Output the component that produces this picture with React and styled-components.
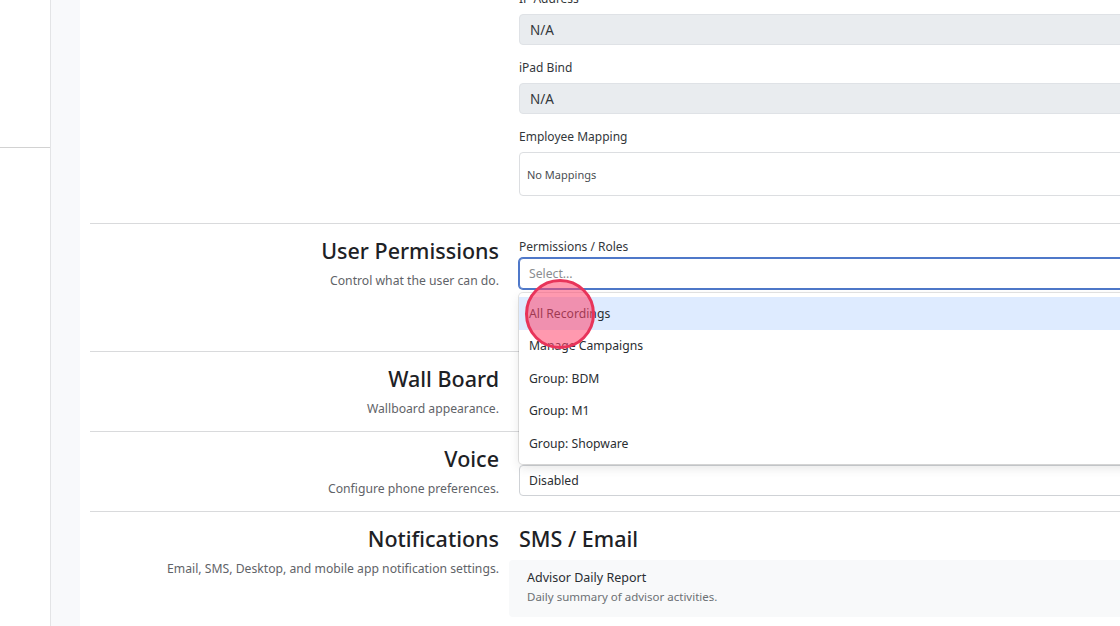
import React from 'react'
import styled, { createGlobalStyle } from 'styled-components'

const GlobalStyle = createGlobalStyle`
  * { box-sizing: border-box; }
  html, body {
    margin: 0;
    padding: 0;
    height: 626px;
    overflow: hidden;
    background: #fff;
    font-family: "Noto Sans", "Open Sans", sans-serif;
    color: #212529;
  }
`

const roles = ['All Recordings', 'Manage Campaigns', 'Group: BDM', 'Group: M1', 'Group: Shopware']

const App = () => {
  return <Page>
    <GlobalStyle />
    <Sidebar>
      <SidebarTop />
    </Sidebar>
    <Gutter />
    <Main>
      <Section $first>
        <SideInfo />
        <Fields>
          <Label>IP Address</Label>
          <ReadOnly>N/A</ReadOnly>
          <Label>iPad Bind</Label>
          <ReadOnly>N/A</ReadOnly>
          <Label>Employee Mapping</Label>
          <MappingBox>No Mappings</MappingBox>
        </Fields>
      </Section>

      <Section $minHeight={128}>
        <SideInfo>
          <Heading>User Permissions</Heading>
          <Desc>Control what the user can do.</Desc>
        </SideInfo>
        <Fields>
          <Label $tight>Permissions / Roles</Label>
          <SelectWrap>
            <SelectBox $focused>
              <Placeholder>Select...</Placeholder>
            </SelectBox>
            <Menu>
              {roles.map((r, i) => (
                <Option key={r} $active={i === 0}>{r}</Option>
              ))}
            </Menu>
            <ClickMark />
          </SelectWrap>
        </Fields>
      </Section>

      <Section>
        <SideInfo>
          <Heading>Wall Board</Heading>
          <Desc>Wallboard appearance.</Desc>
        </SideInfo>
        <Fields />
      </Section>

      <Section>
        <SideInfo>
          <Heading>Voice</Heading>
          <Desc>Configure phone preferences.</Desc>
        </SideInfo>
        <Fields>
          <SelectBox $offset={20}>Disabled</SelectBox>
        </Fields>
      </Section>

      <Section>
        <SideInfo>
          <Heading>Notifications</Heading>
          <Desc>Email, SMS, Desktop, and mobile app notification settings.</Desc>
        </SideInfo>
        <Fields>
          <Heading as="h3" $left>SMS / Email</Heading>
          <NotifyCard>
            <NotifyTitle>Advisor Daily Report</NotifyTitle>
            <NotifyDesc>Daily summary of advisor activities.</NotifyDesc>
          </NotifyCard>
        </Fields>
      </Section>
    </Main>
  </Page>
}

const Page = styled.div`
  display: flex;
  height: 626px;
  overflow: hidden;
`

const Sidebar = styled.aside`
  width: 51px;
  flex-shrink: 0;
  border-right: 1px solid #e3e4e6;
  background: #fff;
`

const SidebarTop = styled.div`
  height: 148px;
  border-bottom: 1px solid #d2d2d2;
`

const Gutter = styled.div`
  width: 29px;
  flex-shrink: 0;
  background: #f8f9fb;
`

const Main = styled.main`
  flex: 1;
  overflow: hidden;
  padding-left: 10px;
  background: #fff;
`

const Section = styled.section`
  width: 1400px;
  display: grid;
  grid-template-columns: 429px 1fr;
  padding-top: 13px;
  padding-bottom: ${p => p.$first ? '27px' : '12px'};
  min-height: ${p => p.$minHeight ? `${p.$minHeight}px` : 'auto'};
  border-top: ${p => p.$first ? 'none' : '1px solid #d9dadc'};
  margin-top: ${p => p.$first ? '-24px' : '0'};
`

const SideInfo = styled.div`
  text-align: right;
  padding-right: 20px;
`

const Heading = styled.h2`
  margin: 0 0 6px;
  font-size: 21.5px;
  line-height: 28px;
  font-weight: 500;
  color: #1d2125;
  text-align: ${p => p.$left ? 'left' : 'inherit'};
`

const Desc = styled.p`
  margin: 0;
  font-size: 12.2px;
  line-height: 20px;
  color: #5f6368;
`

const Fields = styled.div`
  display: flex;
  flex-direction: column;
`

const Label = styled.label`
  font-size: 12px;
  line-height: 20px;
  margin-bottom: ${p => p.$tight ? '1px' : '5px'};
  color: #33373b;
`

const ReadOnly = styled.div`
  height: 31px;
  display: flex;
  align-items: center;
  padding: 0 10px;
  background: #e9ecef;
  border: 1px solid #dfe2e6;
  border-radius: 4px;
  font-size: 13.5px;
  color: #33373b;
  margin-bottom: 13px;
`

const MappingBox = styled.div`
  height: 44px;
  display: flex;
  align-items: center;
  padding: 0 7px;
  border: 1px solid #dcdee1;
  border-radius: 4px;
  font-size: 11px;
  color: #4a4e52;
`

const SelectWrap = styled.div`
  position: relative;
`

const SelectBox = styled.div`
  height: 31px;
  margin-top: ${p => p.$offset ? `${p.$offset}px` : '0'};
  display: flex;
  align-items: center;
  padding: 0 9px;
  border: 1px solid ${p => p.$focused ? '#4f78c9' : '#cfd2d6'};
  box-shadow: ${p => p.$focused ? '0 0 0 1px #4f78c9' : 'none'};
  border-radius: 4px;
  font-size: 12.2px;
  color: #2a2e32;
  background: #fff;
`

const Placeholder = styled.span`
  color: #8a8d90;
`

const Menu = styled.ul`
  position: absolute;
  top: calc(100% + 4px);
  left: 0;
  right: 0;
  z-index: 5;
  margin: 0;
  padding: 4px 0;
  list-style: none;
  background: #fff;
  border-radius: 4px;
  box-shadow: 0 0 0 1px rgba(0, 0, 0, 0.1), 0 4px 11px rgba(0, 0, 0, 0.1);
`

const Option = styled.li`
  height: 32.5px;
  display: flex;
  align-items: center;
  padding: 0 10px;
  font-size: 12.2px;
  color: #2a2e32;
  background: ${p => p.$active ? '#deebff' : 'transparent'};
`

const ClickMark = styled.span`
  position: absolute;
  left: 6px;
  top: 21px;
  width: 70px;
  height: 70px;
  border-radius: 50%;
  border: 3px solid #e8345a;
  background: rgba(255, 70, 110, 0.55);
  z-index: 6;
`

const NotifyCard = styled.div`
  margin: 1px 0 0 -10px;
  padding: 9px 18px 10px;
  background: #f8f9fa;
  border-radius: 4px;
`

const NotifyTitle = styled.div`
  font-size: 12.5px;
  line-height: 18px;
  color: #2a2e32;
`

const NotifyDesc = styled.div`
  font-size: 11.5px;
  line-height: 20px;
  color: #6c7074;
`

export default App
